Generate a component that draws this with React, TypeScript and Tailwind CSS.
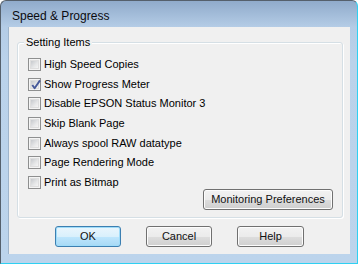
import React from "react";

const items = [
  { label: "High Speed Copies", checked: false },
  { label: "Show Progress Meter", checked: true },
  { label: "Disable EPSON Status Monitor 3", checked: false },
  { label: "Skip Blank Page", checked: false },
  { label: "Always spool RAW datatype", checked: false },
  { label: "Page Rendering Mode", checked: false },
  { label: "Print as Bitmap", checked: false },
];

const CheckBox = ({ checked }: { checked: boolean }) => {
  return (
    <div className="relative w-[13px] h-[13px] shrink-0 border border-[#8e8f8f] bg-[#f4f4f4] p-[1px]">
      <div className="w-full h-full border border-[#dedede] bg-[linear-gradient(135deg,#c6c9cd_0%,#e6e7e8_60%,#f4f4f4_100%)]"></div>
      {checked && (
        <svg className="absolute left-[1px] top-[0px]" width="12" height="12" viewBox="0 0 12 12">
          <path d="M2.3 6 L4.6 9.2 L10 1.4" fill="none" stroke="#46599a" strokeWidth="1.9" strokeLinejoin="round" />
        </svg>
      )}
    </div>
  );
};

const Button = ({ label, primary, className }: { label: string; primary?: boolean; className?: string }) => {
  return (
    <button
      className={
        primary
          ? "h-[21px] rounded-[3px] border border-[#3c7fb1] bg-[linear-gradient(to_bottom,#eaf6fd_0%,#d9f0fc_50%,#bee6fd_51%,#a7d9f5_100%)] shadow-[inset_0_0_0_1px_#9fdcf9] text-[11px] text-[#111] leading-none " +
            (className ?? "")
          : "h-[21px] rounded-[3px] border border-[#707070] bg-[linear-gradient(to_bottom,#f2f2f2_0%,#ebebeb_50%,#dddddd_51%,#cfcfcf_100%)] shadow-[inset_0_0_0_1px_#fcfcfc] text-[11px] text-[#111] leading-none " +
            (className ?? "")
      }
    >
      {label}
    </button>
  );
};

const App = () => {
  return (
    <div className="w-[358px] h-[264px] overflow-hidden font-['Liberation_Sans',Arial,sans-serif]">
      <div className="w-[358px] h-[264px] rounded-t-[6px] border-t border-l border-[#55606c] border-r border-r-[#2fd0f2] border-b border-b-[#2fd0f2] bg-[linear-gradient(to_bottom,#90abcb_0px,#b4cce6_26px,#bad2ea_60px,#bcd4ec_100%)] flex flex-col">
        {/* title */}
        <div className="h-[26px] pl-[11px] pt-[8px]">
          <span className="text-[12px] leading-[15px] text-[#0b0b10] block">Speed &amp; Progress</span>
        </div>
        {/* client */}
        <div className="ml-[7px] w-[342px] h-[227px] bg-[#f0f0f0] border-l border-[#9fb5cc] pl-[8px] pt-[15px]">
          <div className="relative w-[326px] h-[176px] rounded-[3px] border border-[#d5dfe5] shadow-[inset_1px_1px_0_#ffffff,1px_1px_0_#ffffff] flex flex-col">
            <span className="absolute left-[6px] -top-[8px] px-[2px] bg-[#f0f0f0] text-[11px] leading-[14px] text-black">
              Setting Items
            </span>
            <div className="flex flex-col gap-[6.67px] pl-[10px] pt-[15px]">
              {items.map((item) => (
                <div key={item.label} className="flex items-center h-[13px]">
                  <CheckBox checked={item.checked} />
                  <span className="ml-[3px] text-[11px] leading-[13px] text-black whitespace-nowrap">{item.label}</span>
                </div>
              ))}
            </div>
            <div className="mt-auto mb-[9px] mr-[9px] flex justify-end">
              <Button label="Monitoring Preferences" className="w-[130px]" />
            </div>
          </div>
          {/* bottom buttons */}
          <div className="flex gap-[25px] mt-[8px] pl-[38px]">
            <Button label="OK" primary className="w-[66px]" />
            <Button label="Cancel" className="w-[66px]" />
            <Button label="Help" className="w-[67px]" />
          </div>
        </div>
      </div>
    </div>
  );
};

export default App;
